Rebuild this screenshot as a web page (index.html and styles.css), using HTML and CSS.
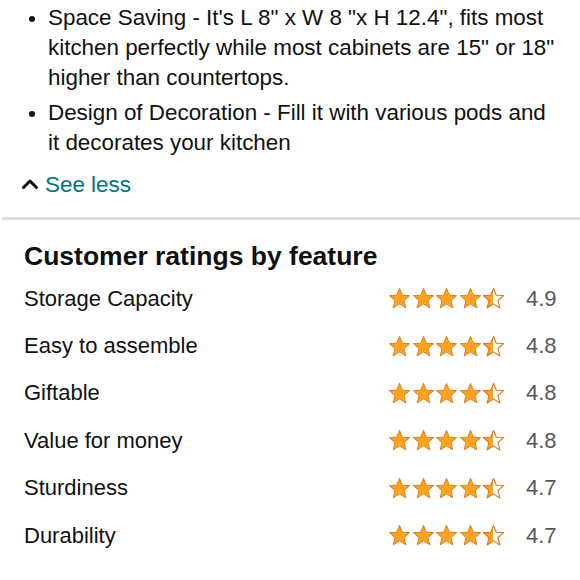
FILE: index.html
```
<!DOCTYPE html>
<html>
<head>
<meta charset="utf-8">
<link rel="stylesheet" href="styles.css">
</head>
<body>
<svg class="defs" width="0" height="0" aria-hidden="true">
  <defs>
    <linearGradient id="half">
      <stop offset="50%" stop-color="#FFA41C"/>
      <stop offset="50%" stop-color="#FFFFFF"/>
    </linearGradient>
    <polygon id="star" points="12,1.4 14.9,8.6 22.6,9.0 16.7,14.1 18.6,21.8 12,17.6 5.4,21.8 7.3,14.1 1.4,9.0 9.1,8.6"/>
  </defs>
</svg>
<section class="features">
  <ul class="bullets">
    <li>Space Saving - It's L 8" x W 8 "x H 12.4", fits most kitchen perfectly while most cabinets are 15" or 18" higher than countertops.</li>
    <li>Design of Decoration - Fill it with various pods and it decorates your kitchen</li>
  </ul>
  <a class="see-less" href="#">
    <svg class="chev" width="18" height="13" viewBox="0 0 18 13"><polyline points="2.5,10.5 9,4 15.5,10.5" fill="none" stroke="#0F1111" stroke-width="3" stroke-linecap="round" stroke-linejoin="round"/></svg>
    <span>See less</span>
  </a>
</section>
<div class="divider"></div>
<section class="ratings">
  <h2>Customer ratings by feature</h2>
  <div class="row"><span class="label">Storage Capacity</span><span class="stars"><svg viewBox="0 0 24 24"><use href="#star" class="full"/></svg><svg viewBox="0 0 24 24"><use href="#star" class="full"/></svg><svg viewBox="0 0 24 24"><use href="#star" class="full"/></svg><svg viewBox="0 0 24 24"><use href="#star" class="full"/></svg><svg viewBox="0 0 24 24"><use href="#star" class="half"/></svg></span><span class="num">4.9</span></div>
  <div class="row"><span class="label">Easy to assemble</span><span class="stars"><svg viewBox="0 0 24 24"><use href="#star" class="full"/></svg><svg viewBox="0 0 24 24"><use href="#star" class="full"/></svg><svg viewBox="0 0 24 24"><use href="#star" class="full"/></svg><svg viewBox="0 0 24 24"><use href="#star" class="full"/></svg><svg viewBox="0 0 24 24"><use href="#star" class="half"/></svg></span><span class="num">4.8</span></div>
  <div class="row"><span class="label">Giftable</span><span class="stars"><svg viewBox="0 0 24 24"><use href="#star" class="full"/></svg><svg viewBox="0 0 24 24"><use href="#star" class="full"/></svg><svg viewBox="0 0 24 24"><use href="#star" class="full"/></svg><svg viewBox="0 0 24 24"><use href="#star" class="full"/></svg><svg viewBox="0 0 24 24"><use href="#star" class="half"/></svg></span><span class="num">4.8</span></div>
  <div class="row"><span class="label">Value for money</span><span class="stars"><svg viewBox="0 0 24 24"><use href="#star" class="full"/></svg><svg viewBox="0 0 24 24"><use href="#star" class="full"/></svg><svg viewBox="0 0 24 24"><use href="#star" class="full"/></svg><svg viewBox="0 0 24 24"><use href="#star" class="full"/></svg><svg viewBox="0 0 24 24"><use href="#star" class="half"/></svg></span><span class="num">4.8</span></div>
  <div class="row"><span class="label">Sturdiness</span><span class="stars"><svg viewBox="0 0 24 24"><use href="#star" class="full"/></svg><svg viewBox="0 0 24 24"><use href="#star" class="full"/></svg><svg viewBox="0 0 24 24"><use href="#star" class="full"/></svg><svg viewBox="0 0 24 24"><use href="#star" class="full"/></svg><svg viewBox="0 0 24 24"><use href="#star" class="half"/></svg></span><span class="num">4.7</span></div>
  <div class="row"><span class="label">Durability</span><span class="stars"><svg viewBox="0 0 24 24"><use href="#star" class="full"/></svg><svg viewBox="0 0 24 24"><use href="#star" class="full"/></svg><svg viewBox="0 0 24 24"><use href="#star" class="full"/></svg><svg viewBox="0 0 24 24"><use href="#star" class="full"/></svg><svg viewBox="0 0 24 24"><use href="#star" class="half"/></svg></span><span class="num">4.7</span></div>
</section>
</body>
</html>
```
FILE: styles.css
```
html, body {
  margin: 0;
  padding: 0;
  background: #ffffff;
}
body {
  font-family: "Liberation Sans", Arial, sans-serif;
  color: #0F1111;
  width: 580px;
  overflow: hidden;
}
.defs {
  position: absolute;
  width: 0;
  height: 0;
}
.features {
  padding: 3px 24px 0 24px;
}
.bullets {
  margin: 0;
  padding: 0 0 0 24px;
  font-size: 22.4px;
  line-height: 30px;
}
.bullets li {
  margin-bottom: 5px;
}
.bullets li::marker {
  font-size: 21px;
}
.see-less {
  display: flex;
  align-items: center;
  gap: 6px;
  margin-top: 12px;
  margin-left: -3px;
  height: 30px;
  font-size: 22.4px;
  color: #007185;
  text-decoration: none;
}
.chev {
  display: block;
  margin-top: -4px;
}
.divider {
  margin-top: 17px;
  margin-left: 2px;
  height: 3px;
  background: #DDDDDD;
}
.ratings {
  padding: 21px 23px 0 24px;
}
.ratings h2 {
  margin: 0 0 4px 0;
  font-size: 26.5px;
  line-height: 30px;
  font-weight: bold;
}
.row {
  display: flex;
  align-items: center;
  height: 47.4px;
  font-size: 22px;
}
.label {
  flex: 1;
}
.stars {
  display: flex;
  gap: 0.5px;
}
.stars svg {
  width: 23px;
  height: 23px;
  display: block;
}
.full {
  fill: #FFA41C;
  stroke: #DE7921;
  stroke-width: 1;
  stroke-linejoin: round;
}
.half {
  fill: url(#half);
  stroke: #DE7921;
  stroke-width: 1.2;
  stroke-linejoin: round;
}
.num {
  margin-left: 21px;
  color: #565959;
  font-size: 22px;
  width: 31px;
}
```
